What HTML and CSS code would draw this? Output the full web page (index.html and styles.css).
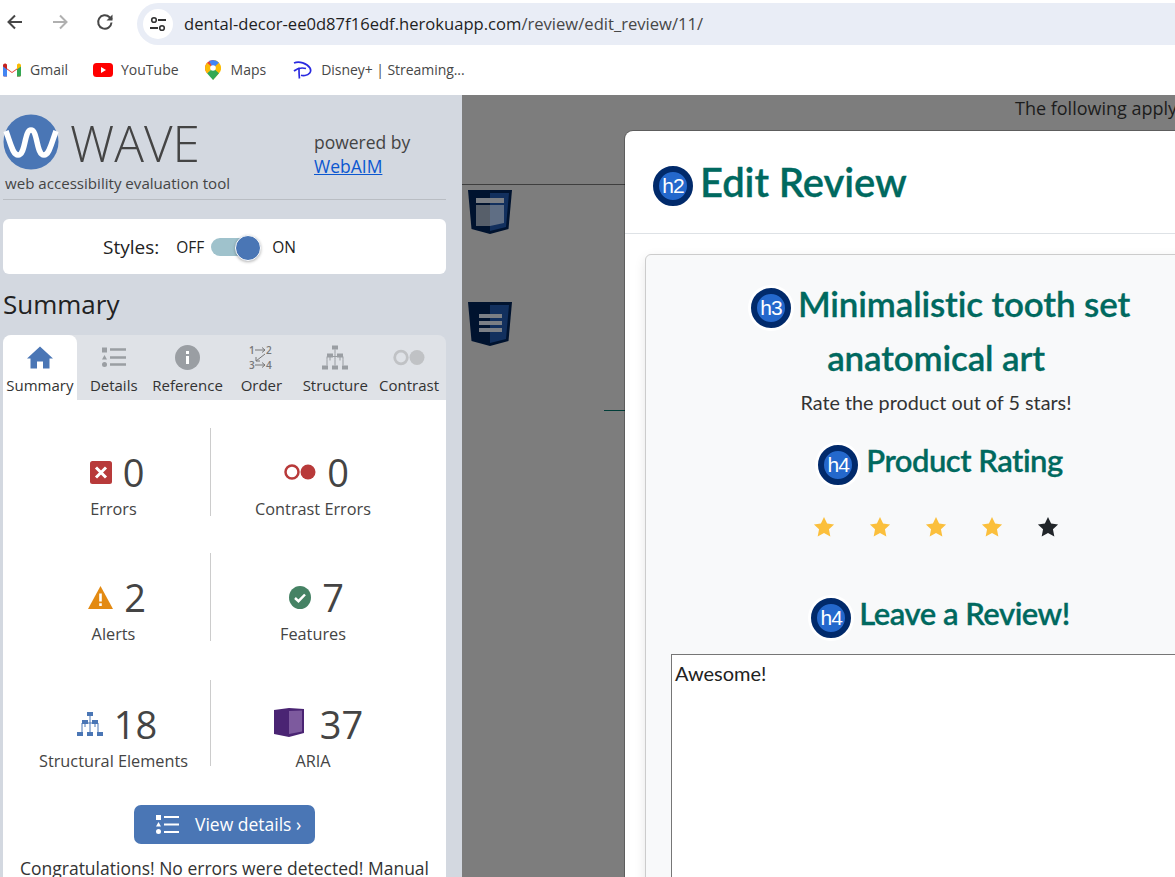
FILE: index.html
```html
<!DOCTYPE html>
<html>
<head>
    <title>Edit Review</title>
    <link rel="stylesheet" href="styles.css">
</head>
<body>
    <div class="toolbar">
        <svg class="nav-icon" width="20" height="20" viewBox="0 0 20 20"><path d="M17 10H4M10 3.5 3.5 10l6.500 6.500" fill="none" stroke="#474747" stroke-width="2"/></svg>
        <svg class="nav-icon" width="20" height="20" viewBox="0 0 20 20"><path d="M3 10h13M10 3.500 16.500 10 10 16.500" fill="none" stroke="#b0b0b0" stroke-width="2"/></svg>
        <svg class="nav-icon" width="20" height="20" viewBox="0 0 20 20"><path d="M16.500 10.500a6.700 6.700 0 1 1-1.900-5.200L17 7.500" fill="none" stroke="#474747" stroke-width="2"/><path d="M17.500 2.500v6h-6z" fill="#474747"/></svg>
        <div class="address">
            <span class="site-info">
                <svg width="18" height="16" viewBox="0 0 18 16"><circle cx="5" cy="4" r="2.300" fill="none" stroke="#333" stroke-width="1.600"/><path d="M9 4h8M1 12h8" stroke="#333" stroke-width="1.800"/><circle cx="13" cy="12" r="2.300" fill="none" stroke="#333" stroke-width="1.600"/></svg>
            </span>
            <span class="url">dental-decor-ee0d87f16edf.herokuapp.com<span class="url-path">/review/edit_review/11/</span></span>
        </div>
    </div>

    <div class="bookmarks">
        <div class="bookmark bookmark-gmail">
            <svg width="18" height="14" viewBox="0 0 18 14"><path d="M0 2.500 9 9l9-6.500V12a1.500 1.500 0 0 1-1.500 1.500H14V6.500L9 10 4 6.500v7H1.500A1.500 1.500 0 0 1 0 12z" fill="#ea4335"/><path d="M0 2.500C0 .8 2 0 3.200 1L4 1.600v5L0 4z" fill="#c5221f"/><path d="M14 1.600 14.800 1C16 0 18 .8 18 2.500V4l-4 2.600z" fill="#fbbc04"/><path d="M14 6.500 18 3.500V12a1.500 1.500 0 0 1-1.500 1.500H14z" fill="#34a853"/><path d="M0 3.500 4 6.500v7H1.500A1.500 1.500 0 0 1 0 12z" fill="#4285f4"/></svg>
            <span>Gmail</span>
        </div>
        <div class="bookmark bookmark-youtube">
            <svg width="20" height="14" viewBox="0 0 20 14"><rect width="20" height="14" rx="3.500" fill="#f00"/><path d="M8 4v6l5-3z" fill="#fff"/></svg>
            <span>YouTube</span>
        </div>
        <div class="bookmark bookmark-maps">
            <svg width="16" height="20" viewBox="0 0 16 20"><path d="M8 0a8 8 0 0 1 6 13.300L8 20z" fill="#fbbc04"/><path d="M8 20 2 13.300 8 8l6 5.300z" fill="#34a853"/><path d="M2 2.700A8 8 0 0 1 8 0l3 4-9 9.300A8 8 0 0 1 2 2.700z" fill="#ea4335"/><path d="M0 8a8 8 0 0 1 2-5.300L8 8l-6 5.300A8 8 0 0 1 0 8z" fill="#fbbc04"/><path d="M8 0a8 8 0 0 1 6 2.700L8 8 4 1z" fill="#4285f4"/><circle cx="8" cy="8" r="2.800" fill="#fff"/></svg>
            <span>Maps</span>
        </div>
        <div class="bookmark bookmark-disney">
            <svg width="20" height="20" viewBox="0 0 20 20"><path d="M1 3C6 1 14 3 17 8c2 4-1 7-5 7.500-2.500.3-4-.2-4-.2M6 7.500c0 3 0 8 .5 11M1 11c3-2.500 8-3.500 12-2.500" fill="none" stroke="#2a2ae0" stroke-width="1.700"/></svg>
            <span>Disney+ | Streaming...</span>
        </div>
    </div>

    <div class="content">
        <aside class="sidebar">
            <div class="brand">
                <div class="brand-logo">
                    <div class="logo-row">
                        <svg width="56" height="56" viewBox="0 0 56 56"><circle cx="28" cy="28" r="27.500" fill="#4a76b5"/><path d="M3 17c5 14 7 24 12 24 8 0 6-25 13-25s5 25 13 25c5 0 7-10 12-24" fill="none" stroke="#fff" stroke-width="5.500"/></svg>
                        <span class="logo-text">WAVE</span>
                    </div>
                    <div class="tagline">web accessibility evaluation tool</div>
                </div>
                <div class="powered">powered by<br><a href="#">WebAIM</a></div>
            </div>

            <div class="styles-box">
                <span class="styles-label">Styles:</span>
                <span class="switch-text">OFF</span>
                <span class="switch"><span class="knob"></span></span>
                <span class="switch-text">ON</span>
            </div>

            <h1 class="summary-title">Summary</h1>

            <div class="tabs">
                <div class="tab active">
                    <svg width="26" height="22" viewBox="0 0 26 22"><path d="M13 0 26 12h-3.500v10H16v-7h-6v7H3.500V12H0z" fill="#4a76b5"/></svg>
                    <span>Summary</span>
                </div>
                <div class="tab">
                    <svg width="24" height="20" viewBox="0 0 24 20"><path d="M0 0h5v5H0zM2.500 7.500 5 12H0z" fill="#9a9ea3"/><circle cx="2.500" cy="17" r="2.500" fill="#9a9ea3"/><path d="M8 2h16M8 10h16M8 17h16" stroke="#9a9ea3" stroke-width="2.400"/></svg>
                    <span>Details</span>
                </div>
                <div class="tab">
                    <svg width="25" height="25" viewBox="0 0 25 25"><circle cx="12.500" cy="12.500" r="12.500" fill="#9a9ea3"/><path d="M11 6h3v3h-3zM11 11h3v8h-3z" fill="#fff"/></svg>
                    <span>Reference</span>
                </div>
                <div class="tab">
                    <svg class="order-icon" width="24" height="29" viewBox="0 -2 24 29"><text x="0" y="9" class="order-num">1</text><text x="17" y="9" class="order-num">2</text><text x="0" y="24" class="order-num">3</text><text x="17" y="24" class="order-num">4</text><path d="M6 5h10M13 2.500 16 5l-3 2.500M6 20h10M13 17.500l3 2.500-3 2.500M16 9l-9 7M7 12v4h4" fill="none" stroke="#777" stroke-width="1"/></svg>
                    <span>Order</span>
                </div>
                <div class="tab">
                    <svg width="26" height="24" viewBox="0 0 26 24"><path d="M13 4v4M5 14v-3h16v3M13 8v6M5 14v6M13 14v6M21 14v6M8 11v4M18 11v4" stroke="#9a9ea3" stroke-width="1" fill="none"/><path d="M10 0h6v4h-6zM5 8h6v4H5zM15 8h6v4h-6zM0 20h6v4H0zM10 20h6v4h-6zM20 20h6v4h-6z" fill="#9a9ea3"/></svg>
                    <span>Structure</span>
                </div>
                <div class="tab">
                    <svg width="32" height="16" viewBox="0 0 32 16"><circle cx="8" cy="8" r="6.300" fill="none" stroke="#c0c2c5" stroke-width="2.800"/><circle cx="24" cy="8" r="7.500" fill="#c0c2c5"/></svg>
                    <span>Contrast</span>
                </div>
            </div>

            <div class="panel">
                <div class="stats">
                    <div class="stat stat-left">
                        <div class="stat-value">
                            <svg width="22" height="23" viewBox="0 0 22 23"><rect width="22" height="23" rx="2.500" fill="#b83a3a"/><path d="M6 6.500 16 16.500M16 6.500 6 16.500" stroke="#fff" stroke-width="3"/></svg>
                            <span class="num">0</span>
                        </div>
                        <div class="stat-label">Errors</div>
                    </div>
                    <div class="stat">
                        <div class="stat-value">
                            <svg width="32" height="16" viewBox="0 0 32 16"><circle cx="8" cy="8" r="6.500" fill="none" stroke="#b83a3a" stroke-width="2.500"/><circle cx="24" cy="8" r="7.500" fill="#b83a3a"/></svg>
                            <span class="num">0</span>
                        </div>
                        <div class="stat-label">Contrast Errors</div>
                    </div>
                    <div class="stat stat-left">
                        <div class="stat-value">
                            <svg width="25" height="23" viewBox="0 0 25 23"><path d="M12.500 0 25 23H0z" fill="#e38a12"/><path d="M11.200 7.500h2.600v8h-2.600zM11.200 17.200h2.600V20h-2.600z" fill="#fff"/></svg>
                            <span class="num">2</span>
                        </div>
                        <div class="stat-label">Alerts</div>
                    </div>
                    <div class="stat">
                        <div class="stat-value">
                            <svg width="22" height="23" viewBox="0 0 22 23"><ellipse cx="11" cy="11.500" rx="11" ry="11.500" fill="#458264"/><path d="M6 12l3.500 3.200L16 8.500" fill="none" stroke="#fff" stroke-width="2.500"/></svg>
                            <span class="num">7</span>
                        </div>
                        <div class="stat-label">Features</div>
                    </div>
                    <div class="stat stat-left stat-last">
                        <div class="stat-value">
                            <svg width="26" height="24" viewBox="0 0 26 24"><path d="M13 4v4M5 14v-3h16v3M13 8v6M5 14v6M13 14v6M21 14v6M8 11v4M18 11v4" stroke="#4a76b5" stroke-width="1" fill="none"/><path d="M10 0h6v4h-6zM5 8h6v4H5zM15 8h6v4h-6zM0 20h6v4H0zM10 20h6v4h-6zM20 20h6v4h-6z" fill="#4a76b5"/></svg>
                            <span class="num">18</span>
                        </div>
                        <div class="stat-label">Structural Elements</div>
                    </div>
                    <div class="stat stat-last">
                        <div class="stat-value">
                            <svg class="aria-icon" width="30" height="29" viewBox="0 0 30 29"><path d="M0 2 15 0l15 1v24l-15 4-15-3z" fill="#4a2473"/><path d="M15 3l13-.5v21L15 26z" fill="#7d5a9e"/></svg>
                            <span class="num">37</span>
                        </div>
                        <div class="stat-label">ARIA</div>
                    </div>
                </div>

                <a class="details-btn" href="#">
                    <svg width="23" height="19" viewBox="0 0 23 19"><path d="M0 0h5v5H0zM2.500 7 5 11.500H0z" fill="#fff"/><circle cx="2.500" cy="16.500" r="2.500" fill="#fff"/><path d="M8 2h15M8 9.500h15M8 17h15" stroke="#fff" stroke-width="2.200"/></svg>
                    <span class="details-text">View details ›</span>
                </a>
                <p class="congrats">Congratulations! No errors were detected! Manual</p>
            </div>
        </aside>

        <main class="page">
            <p class="page-note">The following apply</p>
            <div class="page-rule"></div>
            <svg class="shield shield-first" width="46" height="46" viewBox="0 0 46 46">
                <path d="M1 1h44l-3.500 39L23 45 4.500 40z" fill="#00132f"/><path d="M23 4h19l-3 34-16 4z" fill="#12305e"/>
                <path d="M9 9h28v5H9z" fill="#7b7f85"/><path d="M9 16h14v21H9z" fill="#575f6a"/><path d="M23 16h14v18l-14 3z" fill="#5f6e84"/>
            </svg>
            <svg class="shield" width="46" height="46" viewBox="0 0 46 46">
                <path d="M1 1h44l-3.500 39L23 45 4.500 40z" fill="#00132f"/><path d="M23 4h19l-3 34-16 4z" fill="#12305e"/>
                <path d="M12 13h23v4H12zM12 20h23v4H12zM12 27h23v4H12z" fill="#7b7f85"/>
            </svg>
            <div class="page-dash"></div>

            <div class="modal">
                <div class="modal-header">
                    <h2 class="modal-title"><span class="badge badge-plain">h2</span>Edit Review</h2>
                </div>
                <div class="modal-body">
                    <div class="card">
                        <h3 class="product-name"><span class="badge">h3</span>Minimalistic tooth set anatomical art</h3>
                        <p class="rate-note">Rate the product out of 5 stars!</p>
                        <h4 class="section-title"><span class="badge">h4</span>Product Rating</h4>
                        <div class="stars">
                            <svg class="star" viewBox="0 0 24 24"><path d="M12 1l3.400 7.200 7.600 1-5.600 5.300 1.500 7.800L12 18.500l-6.900 3.800 1.500-7.800L1 9.200l7.600-1z"/></svg>
                            <svg class="star" viewBox="0 0 24 24"><path d="M12 1l3.400 7.200 7.600 1-5.600 5.300 1.500 7.800L12 18.500l-6.900 3.800 1.500-7.800L1 9.200l7.600-1z"/></svg>
                            <svg class="star" viewBox="0 0 24 24"><path d="M12 1l3.400 7.200 7.600 1-5.600 5.300 1.500 7.800L12 18.500l-6.900 3.800 1.500-7.800L1 9.200l7.600-1z"/></svg>
                            <svg class="star" viewBox="0 0 24 24"><path d="M12 1l3.400 7.200 7.600 1-5.600 5.300 1.500 7.800L12 18.500l-6.900 3.800 1.500-7.800L1 9.200l7.600-1z"/></svg>
                            <svg class="star star-empty" viewBox="0 0 24 24"><path d="M12 1l3.400 7.200 7.600 1-5.600 5.300 1.500 7.800L12 18.500l-6.900 3.800 1.500-7.800L1 9.200l7.600-1z"/></svg>
                        </div>
                        <h4 class="section-title section-review"><span class="badge">h4</span>Leave a Review!</h4>
                        <textarea class="review-text">Awesome!</textarea>
                    </div>
                </div>
            </div>
        </main>
    </div>
</body>
</html>
```

FILE: styles.css
```css
body {
    margin: 0;
    height: 877px;
    overflow: hidden;
    background-color: #fff;
    font-family: "Open Sans", sans-serif;
    color: #333;
}

/* browser chrome */
.toolbar {
    height: 47px;
    display: flex;
    align-items: center;
    padding-left: 5px;
    gap: 25px;
    box-sizing: border-box;
}

.nav-icon {
    flex: none;
    margin-top: -3px;
}

.address {
    flex: 1;
    height: 42px;
    margin-left: -3px;
    margin-right: -30px;
    display: flex;
    align-items: center;
    gap: 11px;
    padding-left: 6px;
    background-color: #e9edf6;
    border-radius: 21px;
}

.site-info {
    width: 30px;
    height: 30px;
    display: flex;
    align-items: center;
    justify-content: center;
    background-color: #fff;
    border-radius: 50%;
}

.url {
    font-size: 16.600px;
    color: #1f1f1f;
    white-space: nowrap;
}

.url-path {
    color: #474747;
}

.bookmarks {
    height: 48px;
    display: flex;
    align-items: center;
    font-size: 14px;
    color: #474747;
    box-sizing: border-box;
    padding-bottom: 3px;
}

.bookmark {
    display: flex;
    align-items: center;
    gap: 9px;
    white-space: nowrap;
}

.bookmark-gmail {
    margin-left: 3px;
}

.bookmark-youtube {
    margin-left: 25px;
    gap: 8px;
}

.bookmark-maps {
    margin-left: 26px;
    gap: 10px;
}

.bookmark-disney {
    margin-left: 27px;
    gap: 8px;
    letter-spacing: -0.05px;
}

.content {
    display: flex;
    height: 782px;
}

/* WAVE sidebar */
.sidebar {
    width: 462px;
    flex: none;
    box-sizing: border-box;
    padding: 0 16px 0 3px;
    background-color: #d3d8e0;
    overflow: hidden;
}

.brand {
    height: 105px;
    display: flex;
    border-bottom: 1px solid #b9bdc3;
    box-sizing: border-box;
}

.brand-logo {
    width: 311px;
    padding-top: 19px;
}

.logo-row {
    display: flex;
    align-items: center;
    gap: 11px;
    height: 56px;
}

.logo-text {
    font-size: 49.500px;
    font-weight: 300;
    color: #444;
    line-height: 50px;
    padding-top: 1px;
}

.tagline {
    margin: 3px 0 0 2px;
    font-size: 15.100px;
    line-height: 20px;
    color: #444;
}

.powered {
    padding-top: 35px;
    font-size: 17.500px;
    line-height: 24px;
    color: #444;
}

.powered a {
    color: #0b57d0;
}

.styles-box {
    height: 55px;
    margin-top: 19px;
    display: flex;
    align-items: center;
    padding-left: 100px;
    background-color: #fff;
    border-radius: 6px;
}

.styles-label {
    font-size: 19px;
    margin-right: 17px;
    color: #222;
}

.switch-text {
    font-size: 15.500px;
    color: #222;
}

.switch {
    position: relative;
    width: 49px;
    height: 18px;
    margin: 0 12px 0 7px;
    background-color: #9fc2cc;
    border-radius: 9px;
}

.knob {
    position: absolute;
    right: -1px;
    top: -3px;
    width: 24px;
    height: 24px;
    background-color: #4a76b5;
    border: 1px solid #fff;
    border-radius: 50%;
    box-shadow: 0 1px 3px rgba(0, 0, 0, 0.3);
}

.summary-title {
    margin: 13px 0 14px;
    font-size: 26px;
    font-weight: 400;
    line-height: 34px;
    color: #222;
}

.tabs {
    display: grid;
    grid-template-columns: repeat(6, 1fr);
    height: 65px;
    background-color: #dfe2e7;
    border-radius: 8px 8px 0 0;
}

.tab {
    display: flex;
    flex-direction: column;
    align-items: center;
    font-size: 15px;
    color: #333;
    position: relative;
}

.tab svg {
    height: 25px;
    margin-top: 10px;
}

.tab .order-icon {
    height: 29px;
    margin-top: 8px;
}

.tab span {
    position: absolute;
    top: 40px;
    line-height: 20px;
    white-space: nowrap;
}

.tab.active {
    background-color: #fff;
    border-radius: 8px 8px 0 0;
}

.order-num {
    font-family: "Open Sans", sans-serif;
    font-size: 10px;
    font-weight: 600;
    fill: #777;
}

.panel {
    background-color: #fff;
    height: 477px;
    padding-top: 28px;
    box-sizing: border-box;
    text-align: center;
}

.stats {
    display: grid;
    grid-template-columns: 194px 204px;
    grid-auto-rows: 88px;
    row-gap: 37px;
    padding-left: 14px;
}

.stat {
    position: relative;
    color: #444;
}

.stat-left {
    border-right: 1px solid #ccc;
}

.stat-last {
    margin-top: 2px;
}

.stat-value {
    height: 46px;
    margin-top: 21px;
    padding-left: 7px;
    display: flex;
    align-items: center;
    justify-content: center;
    gap: 11px;
}

.num {
    font-size: 38px;
    font-weight: 400;
    line-height: 46px;
}

.aria-icon {
    margin: -3px 5px 0 4px;
}

.stat-label {
    margin-top: 1px;
    font-size: 16.300px;
    line-height: 26px;
}

.details-btn {
    display: flex;
    align-items: center;
    gap: 16px;
    width: 181px;
    height: 39px;
    margin: 39px auto 0;
    padding-left: 22px;
    box-sizing: border-box;
    background-color: #4a76b5;
    border-radius: 7px;
    color: #fff;
    font-size: 17.500px;
    text-decoration: none;
}

.details-text {
    padding-bottom: 2px;
}

.congrats {
    margin: 12px 0 0;
    font-size: 17.500px;
    line-height: 24px;
    white-space: nowrap;
    color: #333;
}

/* page behind the modal */
.page {
    position: relative;
    flex: 1;
    background-color: #7d7d7d;
    overflow: hidden;
}

.page-note {
    margin: 0;
    padding: 1px 0 0 553px;
    font-size: 18px;
    line-height: 24px;
    white-space: nowrap;
    color: #1c1c1c;
}

.page-rule {
    height: 1px;
    margin-top: 64px;
    background-color: #3e3e3e;
}

.shield {
    display: block;
    margin: 66px 0 0 5px;
}

.shield-first {
    margin-top: 4px;
}

.page-dash {
    width: 60px;
    height: 1px;
    margin: 63px 0 0 142px;
    background-color: #003d38;
}

/* modal */
.modal {
    position: absolute;
    left: 163px;
    top: 36px;
    width: 622px;
    height: 800px;
    background-color: #fff;
    border-radius: 8px 0 0 0;
    box-shadow: 0 0 0 1px rgba(0, 0, 0, 0.25);
    font-family: Lato, sans-serif;
}

.modal-header {
    height: 103px;
    box-sizing: border-box;
    border-bottom: 1px solid #dee2e6;
    padding: 26px 0 0 28px;
}

.modal-title,
.product-name,
.section-title {
    margin: 0;
    font-weight: 600;
    color: #00695f;
    -webkit-text-stroke: 0.3px #00695f;
}

.modal-title {
    font-size: 40px;
    line-height: 50px;
    letter-spacing: -0.1px;
}

.badge {
    display: inline-block;
    width: 40px;
    height: 40px;
    box-sizing: border-box;
    margin: 0 7px 0 9px;
    background-color: #2468cc;
    border: 6px solid #012a6b;
    border-radius: 50%;
    box-shadow: 0 0 0 3px #fff;
    font-family: "Liberation Sans", sans-serif;
    font-size: 21px;
    font-weight: 400;
    letter-spacing: -1px;
    line-height: 28px;
    text-align: center;
    color: #fff;
    vertical-align: 2px;
    -webkit-text-stroke: 0;
}

.badge-plain {
    margin: 0 7px 0 0;
    vertical-align: 4px;
}

.section-title .badge {
    vertical-align: 0;
    margin-right: 8px;
}

.modal-body {
    padding: 20px;
}

.card {
    height: 700px;
    box-sizing: border-box;
    padding: 21px 25px 0;
    background-color: #f8f9fa;
    border: 1px solid #ccc;
    border-radius: 6px;
    box-shadow: 0 4px 12px rgba(0, 0, 0, 0.1);
    text-align: center;
}

.product-name {
    font-size: 35px;
    line-height: 54px;
    letter-spacing: -0.15px;
}

.rate-note {
    margin: 5px 0 0;
    font-size: 19.800px;
    line-height: 27px;
    color: #333;
}

.section-title {
    margin-top: 24px;
    font-size: 31px;
    line-height: 40px;
    letter-spacing: -0.5px;
}

.section-review {
    margin-top: 55px;
}

.stars {
    display: flex;
    justify-content: center;
    gap: 34px;
    margin-top: 31px;
}

.star {
    width: 22px;
    height: 22px;
    fill: #fbbf3c;
}

.star-empty {
    fill: #212529;
}

.review-text {
    display: block;
    width: 531px;
    height: 300px;
    margin-top: 16px;
    padding: 6px 3px;
    box-sizing: border-box;
    border: 1px solid #767676;
    background-color: #fff;
    font-family: Lato, sans-serif;
    font-size: 20px;
    line-height: 24px;
    color: #222;
    resize: none;
}
```
